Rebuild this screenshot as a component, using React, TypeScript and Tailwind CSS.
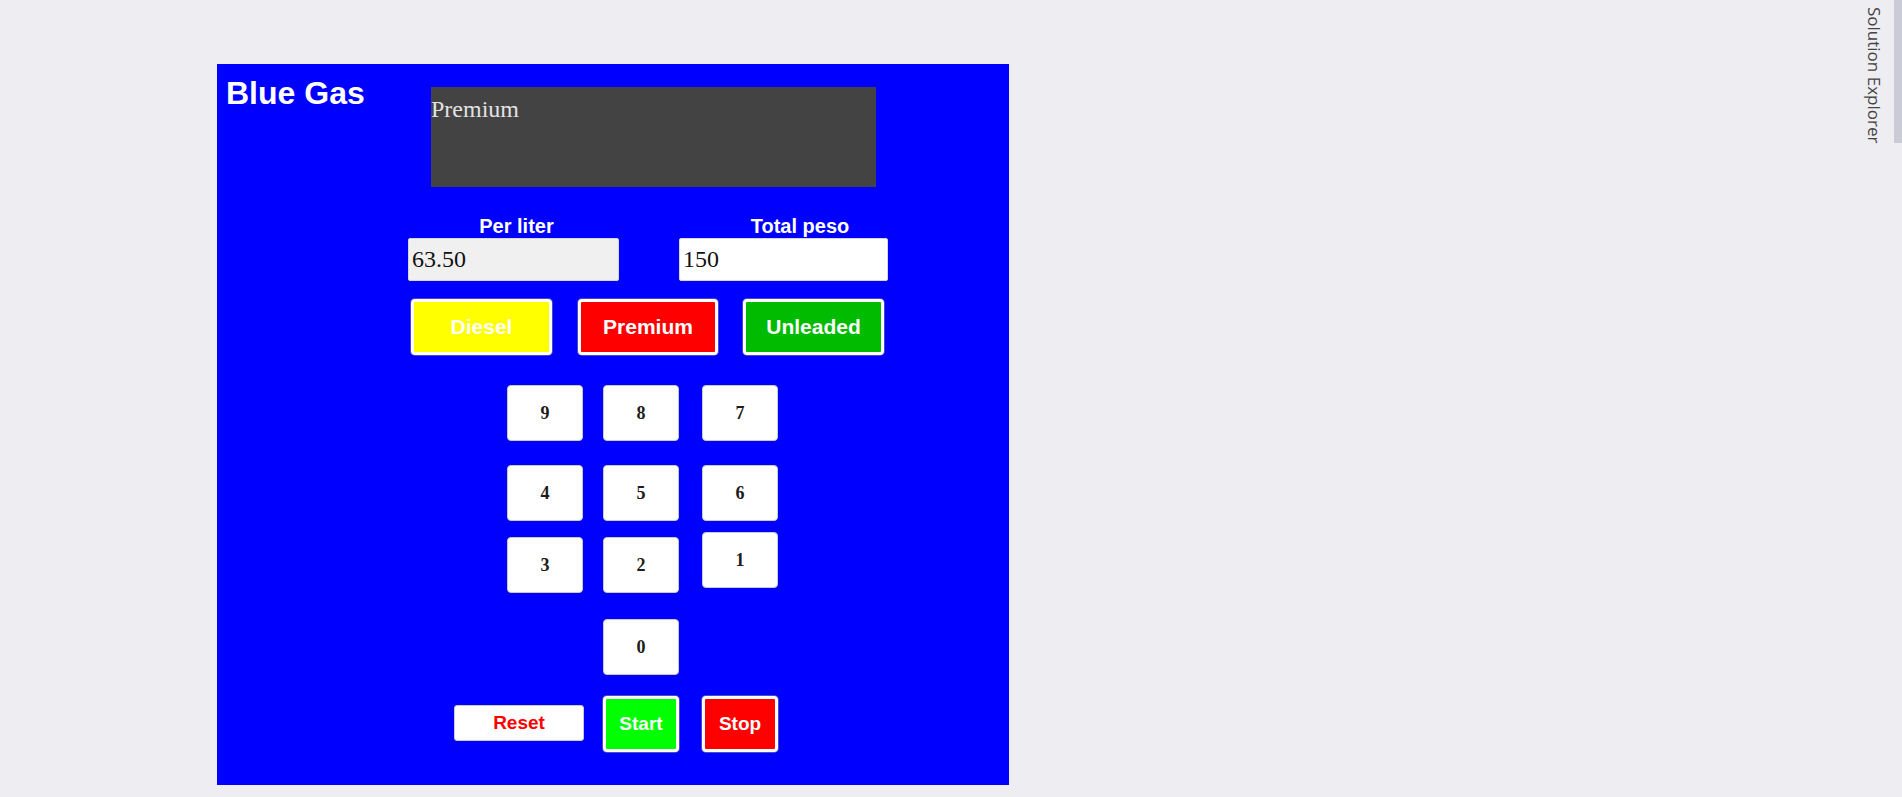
const sans = "font-['Liberation_Sans',Arial,sans-serif]";
const serif = "font-['Liberation_Serif','Times_New_Roman',serif]";

const fuelBtn =
  "h-[56px] rounded-[4px] border-[3px] border-white text-white text-[21px] font-bold shadow-[0_0_0_1px_rgba(120,120,160,0.6)]";

const keyBtn =
  "w-[76px] h-[56px] bg-white rounded-[4px] border border-[#c9c9c9] text-[18px] font-semibold text-[#1c1c1c] " + serif;

function Key({ label, className = "" }: { label: string; className?: string }) {
  return <button className={`${keyBtn} ${className}`}>{label}</button>;
}

export default function App() {
  return (
    <div className={`min-h-[797px] bg-[#eeedf2] flex justify-between ${sans}`}>
      <div className="ml-[217px] mt-[64px] w-[792px] h-[721px] bg-[#0000ff] flex flex-col">
        {/* header + display */}
        <div className="flex pl-[9px]">
          <h1 className="w-[205px] pt-[13px] text-[32px] leading-[32px] font-bold text-white">
            Blue Gas
          </h1>
          <div
            className={`mt-[23px] w-[445px] h-[100px] bg-[#434343] pt-[10px] text-[24px] leading-none text-[#e2e2e2] ${serif}`}
          >
            Premium
          </div>
        </div>

        {/* price fields */}
        <div className="flex mt-[29px] ml-[191px] gap-[60px]">
          <div className="w-[211px] flex flex-col">
            <label className="h-[20px] leading-[20px] text-[20px] font-bold text-white text-center pl-[6px]">
              Per liter
            </label>
            <input
              readOnly
              value="63.50"
              className={`mt-[2px] h-[43px] bg-[#f0f0f0] border border-[#d6d6d6] rounded-[2px] px-[3px] text-[24px] text-[#111] ${serif}`}
            />
          </div>
          <div className="w-[209px] flex flex-col">
            <label className="h-[20px] leading-[20px] text-[20px] font-bold text-white text-center pl-[33px]">
              Total peso
            </label>
            <input
              readOnly
              value="150"
              className={`mt-[2px] h-[43px] bg-white border border-[#d6d6d6] rounded-[2px] px-[3px] text-[24px] text-[#111] ${serif}`}
            />
          </div>
        </div>

        {/* fuel type */}
        <div className="flex mt-[18px] ml-[194px]">
          <button className={`${fuelBtn} w-[141px] bg-[#ffff00]`}>Diesel</button>
          <button className={`${fuelBtn} w-[140px] ml-[26px] bg-[#ff0000]`}>Premium</button>
          <button className={`${fuelBtn} w-[141px] ml-[25px] bg-[#00bb00]`}>Unleaded</button>
        </div>

        {/* keypad */}
        <div className="flex flex-col ml-[290px] mt-[30px]">
          <div className="flex">
            <Key label="9" />
            <Key label="8" className="ml-[20px]" />
            <Key label="7" className="ml-[23px]" />
          </div>
          <div className="flex mt-[24px]">
            <Key label="4" />
            <Key label="5" className="ml-[20px]" />
            <Key label="6" className="ml-[23px]" />
          </div>
          <div className="flex items-start mt-[11px]">
            <Key label="3" className="mt-[5px]" />
            <Key label="2" className="ml-[20px] mt-[5px]" />
            <Key label="1" className="ml-[23px]" />
          </div>
          <div className="flex mt-[26px]">
            <Key label="0" className="ml-[96px]" />
          </div>
        </div>

        {/* controls */}
        <div className="flex items-center mt-[21px] ml-[237px]">
          <button className="w-[130px] h-[36px] mt-[-2px] bg-white rounded-[3px] border border-[#c9c9c9] text-[19px] font-bold text-[#ff0000]">
            Reset
          </button>
          <button className="ml-[19px] w-[76px] h-[56px] bg-[#00ff00] rounded-[4px] border-[3px] border-white text-[19px] font-bold text-white shadow-[0_0_0_1px_rgba(150,150,150,0.5)]">
            Start
          </button>
          <button className="ml-[23px] w-[76px] h-[56px] bg-[#ff0000] rounded-[4px] border-[3px] border-white text-[19px] font-bold text-white shadow-[0_0_0_1px_rgba(150,150,150,0.5)]">
            Stop
          </button>
        </div>
      </div>

      {/* side tab */}
      <div className="flex items-start">
        <div className="pt-[7px] mr-[10px] [writing-mode:vertical-rl] text-[17px] leading-[20px] text-[#444] font-['Open_Sans','Noto_Sans',sans-serif]">
          Solution Explorer
        </div>
        <div className="w-[8px] h-[143px] bg-[#cbcbd7]" />
      </div>
    </div>
  );
}
